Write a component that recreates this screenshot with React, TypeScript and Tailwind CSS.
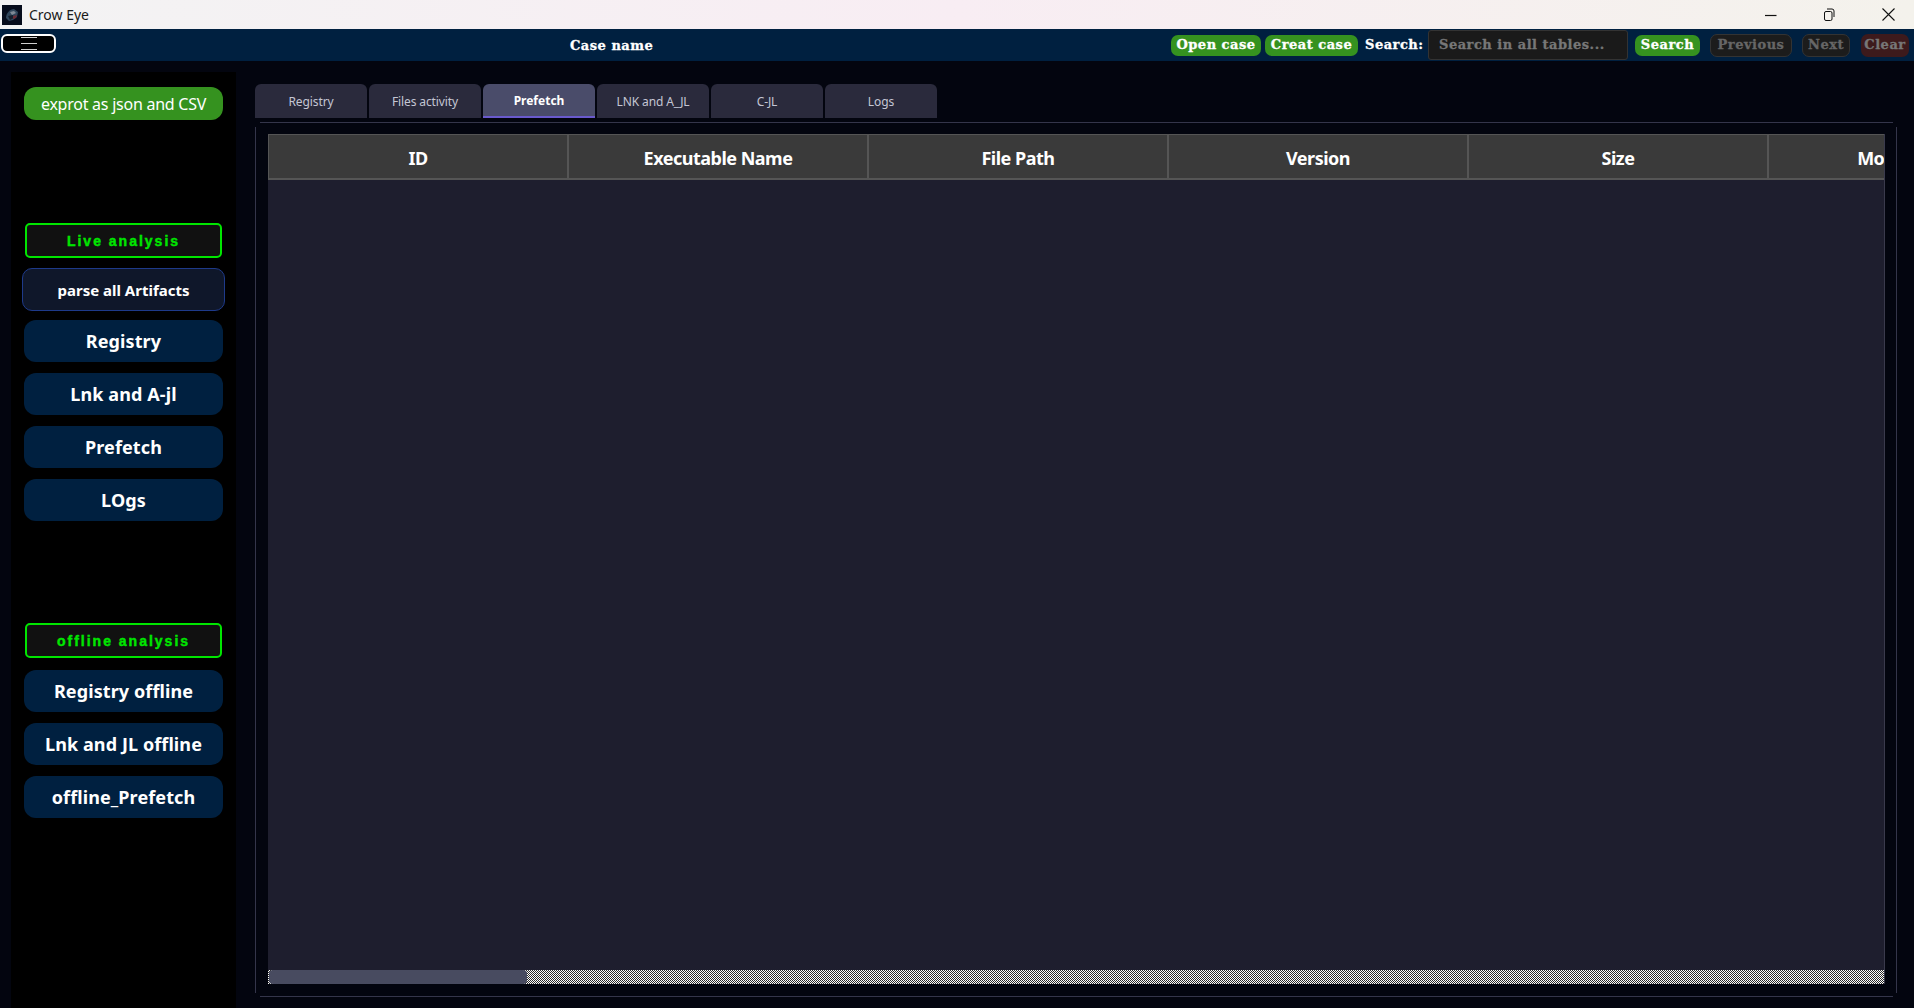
import React from 'react';

const body = { fontFamily: '"Noto Sans", sans-serif' };

const liveItems = ['Registry', 'Lnk and A-jl', 'Prefetch', 'LOgs'];
const offlineItems = ['Registry offline', 'Lnk and JL offline', 'offline_Prefetch'];
const tabs = ['Registry', 'Files activity', 'Prefetch', 'LNK and A_JL', 'C-JL', 'Logs'];
const columns = ['ID', 'Executable Name', 'File Path', 'Version', 'Size', 'Modified Time'];

const NavButton = ({ label }: { label: string }) => (
  <button className="w-[199px] h-[42px] ml-[13px] mb-[11px] rounded-[12px] bg-[#002040] text-white text-[18px] font-bold tracking-[0.1px] flex items-center justify-center">
    {label}
  </button>
);

const SectionLabel = ({ label }: { label: string }) => (
  <div className="w-[197px] h-[35px] ml-[14px] pt-px rounded-[5px] border-2 border-[#00e600] bg-[#111111] text-[#00e600] text-[14px] font-bold tracking-[2px] [-webkit-text-stroke:0.4px_#00e600] flex items-center justify-center font-['Liberation_Sans',sans-serif]">
    {label}
  </div>
);

const TitleBar = () => (
  <div className="h-[29px] shrink-0 flex items-center bg-gradient-to-r from-[#f3f3f3] via-[#f8edf3] to-[#f4f2ec]">
    <svg className="ml-[2px] w-[20px] h-[20px]" viewBox="0 0 20 20">
      <rect width="20" height="20" fill="#070d1c" />
      <path d="M4 13 C4 8 8 4 12 4 L16 7 L15 12 L11 15 L7 16 Z" fill="#31475c" />
      <path d="M8 7 L12 6 L14 8 L10 10 Z" fill="#7f8a96" />
      <path d="M6 11 L11 10 L12 13 L8 15 Z" fill="#16202e" />
      <path d="M11 11 L15 10 L14 13 L11 14 Z" fill="#6d2a34" />
    </svg>
    <span className="ml-[7px] text-[14px] text-[#1a1a1a]" style={body}>Crow Eye</span>
    <div className="ml-auto flex items-center">
      <svg className="w-[12px] h-[12px] mr-[46px]" viewBox="0 0 12 12"><path d="M0 6.5 H11.5" stroke="#111" strokeWidth="1.2" /></svg>
      <svg className="w-[12px] h-[13px] mr-[47px]" viewBox="0 0 12 13" fill="none" stroke="#111"><rect x="1.5" y="3.5" width="7.5" height="9" rx="1.5" /><path d="M4 1 H9 Q11 1 11 3 V9" /></svg>
      <svg className="w-[13px] h-[13px] mr-[19px]" viewBox="0 0 13 13" stroke="#111" strokeWidth="1.1"><path d="M0.5 0.5 L12.5 12.5 M12.5 0.5 L0.5 12.5" /></svg>
    </div>
  </div>
);

const TopBar = () => (
  <div className="h-[32px] shrink-0 bg-[#002040] flex items-center font-['DejaVu_Serif',serif] font-bold text-[13px] tracking-[0.5px] [-webkit-text-stroke:0.3px]">
    <button className="ml-[1px] mt-[-3px] w-[55px] h-[19px] bg-black border-2 border-white rounded-[6px] flex flex-col items-center justify-center gap-[5px]">
      <span className="block w-[16px] h-px bg-[#cfcfcf]" />
      <span className="block w-[16px] h-px bg-[#cfcfcf]" />
      <span className="block w-[16px] h-px bg-[#cfcfcf]" />
    </button>
    <span className="ml-[514px] pt-[2px] text-white">Case name</span>
    <div className="ml-auto flex items-center">
      <button className="w-[90px] h-[21px] rounded-[7px] bg-[#35921f] text-white flex items-center justify-center">Open case</button>
      <button className="w-[93px] h-[21px] ml-[4px] rounded-[7px] bg-[#35921f] text-white flex items-center justify-center">Creat case</button>
      <span className="ml-[7px] w-[63px] text-white">Search:</span>
      <div className="w-[200px] h-[30px] rounded-[3px] border border-[#333] bg-[#1a1a1a] text-[#777] pl-[10px] flex items-center">Search in all tables...</div>
      <button className="w-[65px] h-[21px] ml-[7px] rounded-[7px] bg-[#35921f] text-white flex items-center justify-center">Search</button>
      <button className="w-[82px] h-[23px] ml-[10px] rounded-[7px] border border-[#333] bg-[#1c1c1c] text-[#666] flex items-center justify-center">Previous</button>
      <button className="w-[48px] h-[23px] ml-[10px] rounded-[7px] border border-[#333] bg-[#1c1c1c] text-[#666] flex items-center justify-center">Next</button>
      <button className="w-[48px] h-[23px] ml-[11px] mr-[5px] rounded-[7px] bg-[#3d1a1c] text-[#777] flex items-center justify-center">Clear</button>
    </div>
  </div>
);

const Sidebar = () => (
  <div className="ml-[11px] mt-[11px] w-[225px] shrink-0 bg-black flex flex-col items-start">
    <button className="mt-[15px] ml-[13px] w-[199px] h-[33px] rounded-[12px] bg-[#35921f] text-white text-[16px] tracking-[-0.25px] flex items-center justify-center" style={body}>
      exprot as json and CSV
    </button>
    <div className="mt-[103px]"><SectionLabel label="Live analysis" /></div>
    <button className="w-[203px] h-[43px] ml-[11px] mt-[10px] mb-[9px] pt-px rounded-[10px] border border-[#1e3a8a] bg-[#0f172a] text-white text-[15px] font-bold flex items-center justify-center">
      parse all Artifacts
    </button>
    {liveItems.map((item) => <NavButton key={item} label={item} />)}
    <div className="mt-[91px] mb-[12px]"><SectionLabel label="offline analysis" /></div>
    {offlineItems.map((item) => <NavButton key={item} label={item} />)}
  </div>
);

const Tabs = () => (
  <div className="flex gap-[2px]">
    {tabs.map((tab) => (
      <div
        key={tab}
        className={
          tab === 'Prefetch'
            ? 'w-[112px] h-[34px] pt-px rounded-t-[6px] bg-[#4a4c6a] border-b-2 border-[#6a5acd] text-white text-[12px] font-bold flex items-center justify-center'
            : 'w-[112px] h-[34px] pt-[2px] rounded-t-[6px] bg-[#2a2a3c] text-[#c4c6d4] text-[12px] tracking-[-0.1px] flex items-center justify-center'
        }
      >
        {tab}
      </div>
    ))}
  </div>
);

const DataTable = () => (
  <div className="flex-1 min-h-0 flex flex-col overflow-hidden bg-[#1e1e2e] border-r border-[#3a3a4c]">
    <div className="flex h-[46px] shrink-0 overflow-hidden border-t border-[#555] border-b-2 border-b-[#555] border-l border-l-[#555]">
      {columns.map((col) => (
        <div key={col} className="w-[300px] shrink-0 pt-[3px] bg-[#3a3a3a] border-r-2 border-[#555] text-white text-[18px] font-bold tracking-[-0.5px] flex items-center justify-center whitespace-nowrap">
          {col}
        </div>
      ))}
    </div>
    <div className="flex-1" />
    <div className="h-[14px] shrink-0 pl-px bg-[repeating-conic-gradient(#ffffff_0_25%,#2a2a2a_0_50%)] bg-[length:2px_2px]">
      <div className="w-[258px] h-full rounded-[4px] bg-[#484b60]" />
    </div>
  </div>
);

export default function App() {
  return (
    <div className="w-[1914px] h-[1008px] overflow-hidden flex flex-col bg-[#03050f]" style={body}>
      <TitleBar />
      <TopBar />
      <div className="flex-1 min-h-0 flex">
        <Sidebar />
        <div className="ml-[19px] mr-[17px] mt-[23px] mb-[11px] flex-1 min-w-0 flex flex-col">
          <Tabs />
          <div className="relative mt-[4px] flex-1 min-h-0 flex flex-col pl-[13px] pt-[12px] pr-[12px] pb-[13px]">
            {/* pane outline, the corners stay open like in the Qt theme */}
            <div className="absolute top-0 left-[5px] right-[4px] h-px bg-[#34354a]" />
            <div className="absolute bottom-0 left-[5px] right-[4px] h-px bg-[#34354a]" />
            <div className="absolute left-0 top-[5px] bottom-[4px] w-px bg-[#34354a]" />
            <div className="absolute right-0 top-[5px] bottom-[4px] w-px bg-[#34354a]" />
            <DataTable />
          </div>
        </div>
      </div>
    </div>
  );
}
